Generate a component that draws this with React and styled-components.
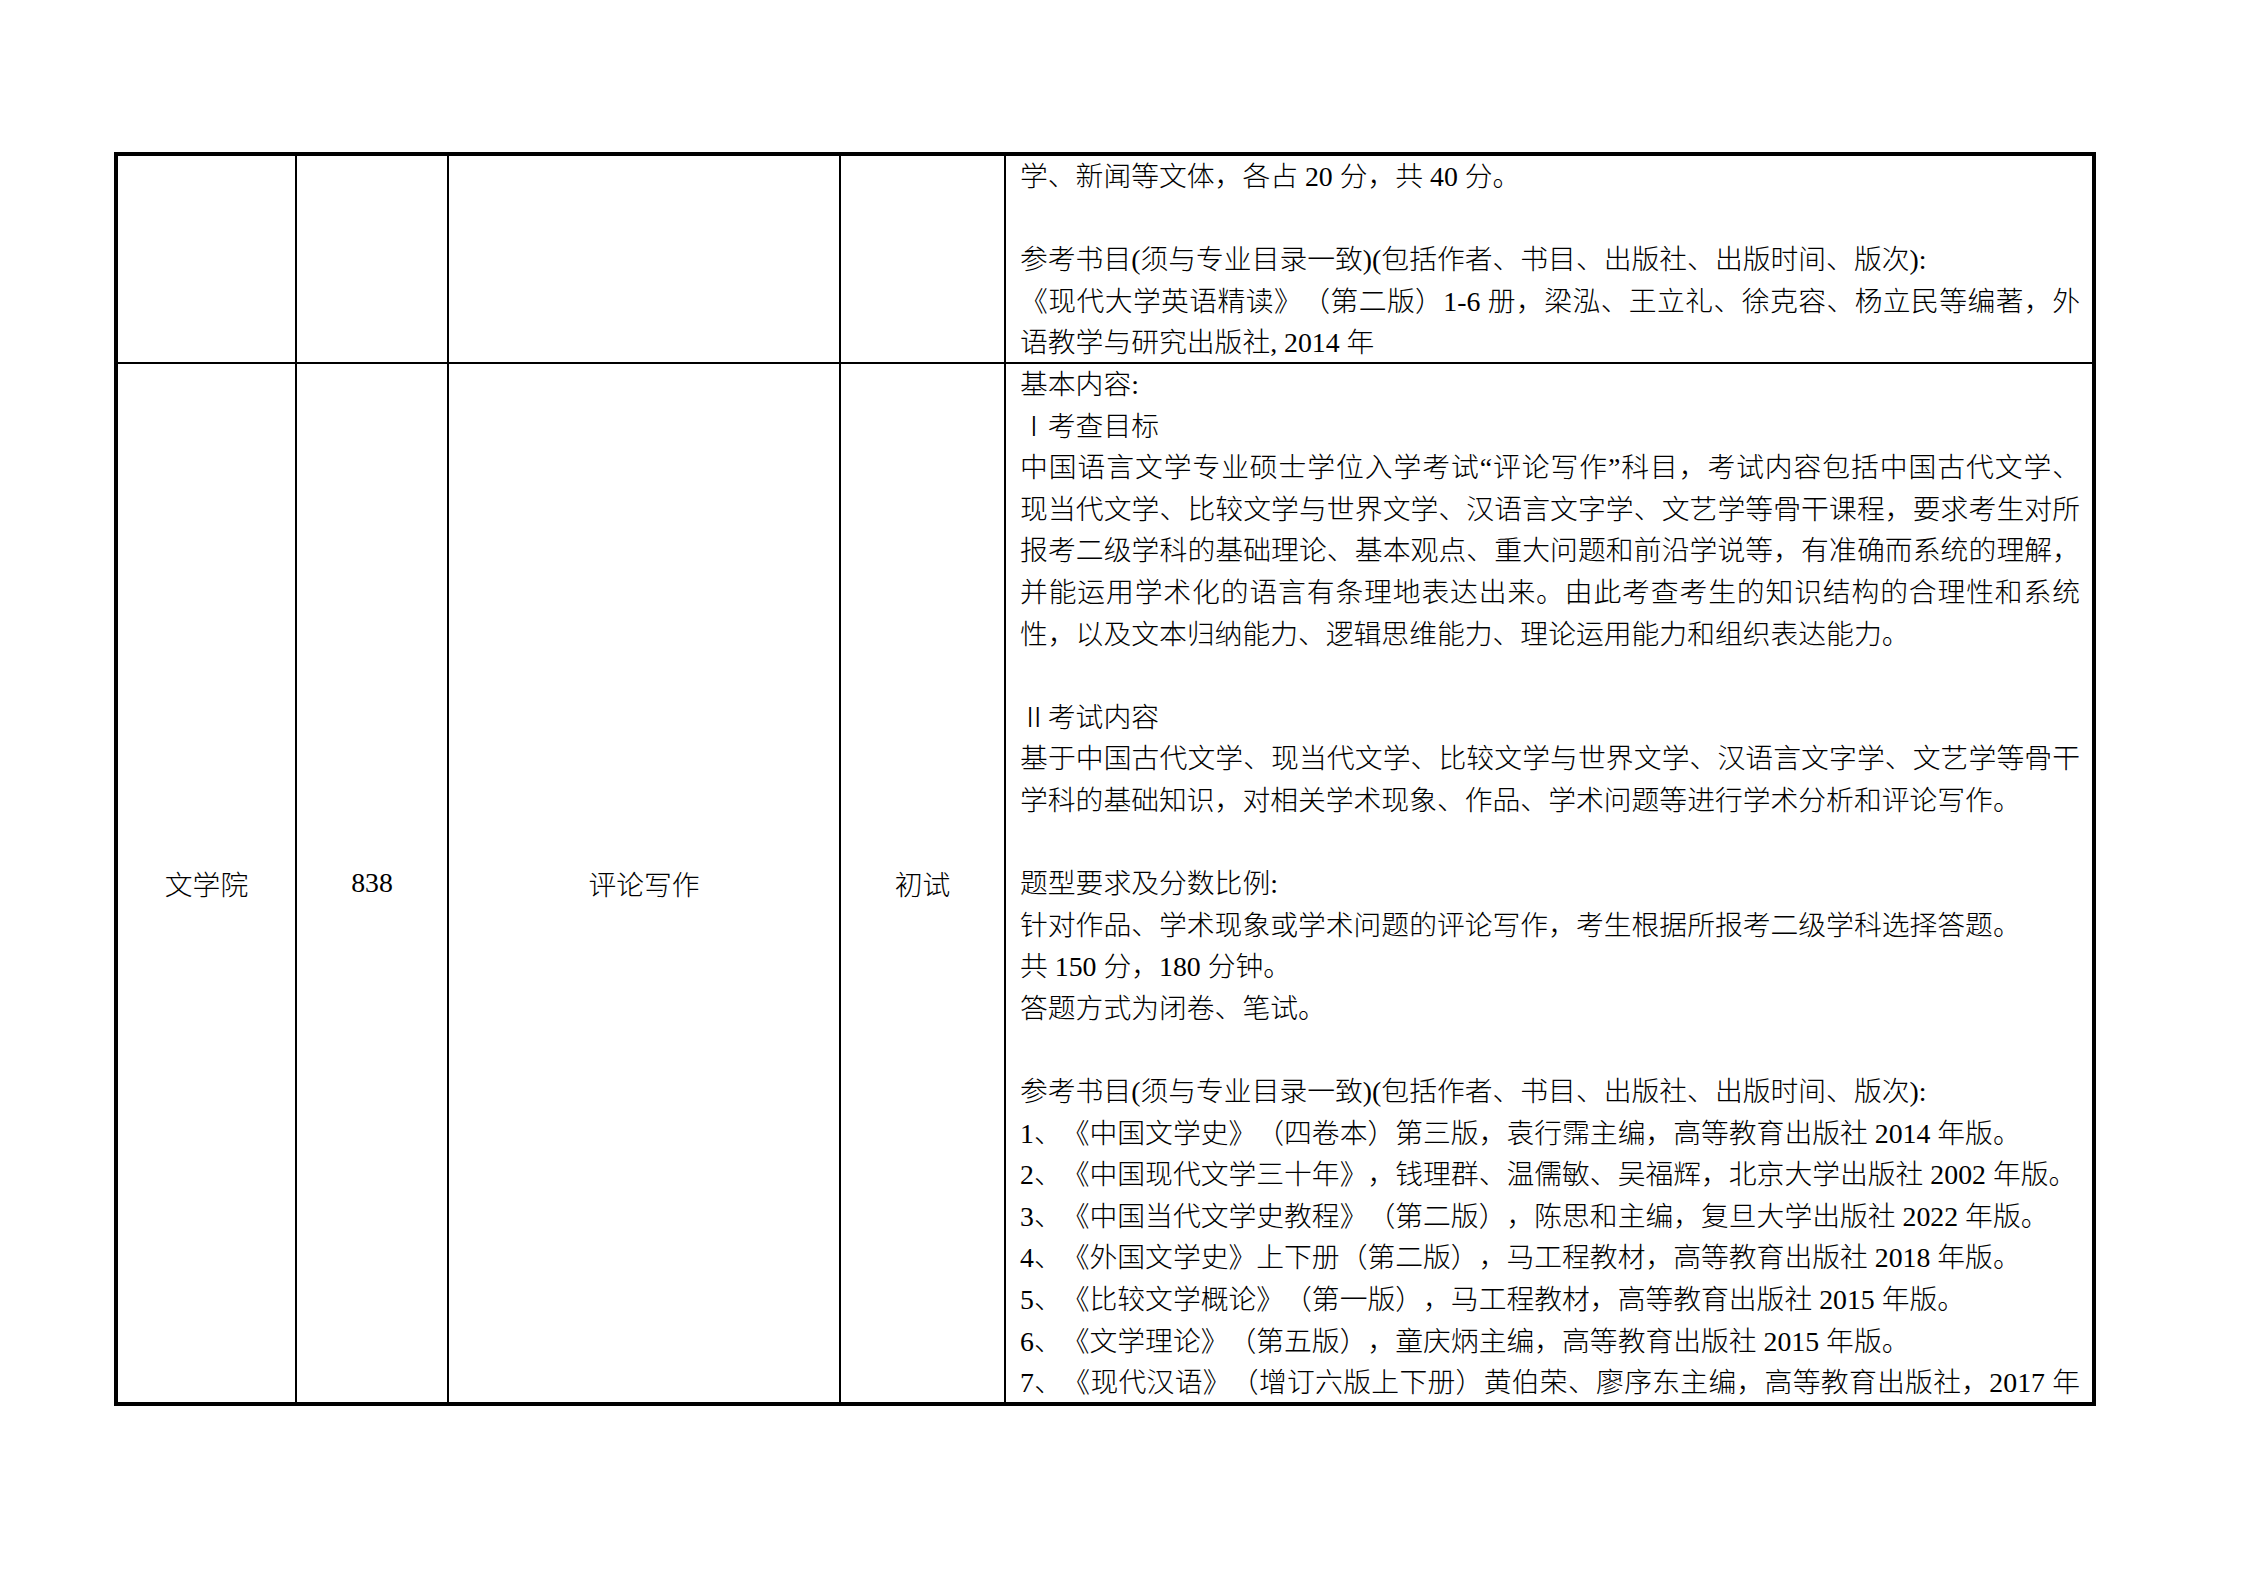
import styled, { createGlobalStyle } from "styled-components";

const GlobalStyle = createGlobalStyle`
  html, body {
    margin: 0;
    padding: 0;
    background: #ffffff;
  }
  body {
    font-family: "Liberation Serif", "Noto Sans CJK SC", serif;
    color: #000000;
    text-spacing-trim: space-all;
  }
`;

const Page = styled.div`
  width: 2244px;
  height: 1586px;
  padding: 152px 0 0 114px;
  box-sizing: border-box;
`;

const Table = styled.div`
  display: grid;
  grid-template-columns: 177px 150px 390px 163px 1086px;
  grid-template-rows: 206px 1038px;
  gap: 2px;
  width: max-content;
  border: 4px solid #000;
  background: #000;
`;

const Cell = styled.div`
  background: #fff;
  display: flex;
  align-items: center;
  justify-content: center;
  font-size: 27.8px;
  font-weight: 300;
`;

const TextCell = styled.div`
  background: #fff;
  padding: 0 12px 0 14px;
  font-size: 27.8px;
  font-weight: 300;
  overflow: hidden;
`;

const Line = styled.div`
  height: 41.6px;
  line-height: 41.6px;
  text-align: ${(p) => (p.$full ? "justify" : "left")};
  text-align-last: ${(p) => (p.$full ? "justify" : "left")};
  white-space: ${(p) => (p.$full ? "normal" : "nowrap")};
  text-spacing-trim: space-all;
`;

const firstRow = [
  { t: "学、新闻等文体，各占 20 分，共 40 分。" },
  { t: "" },
  { t: "参考书目(须与专业目录一致)(包括作者、书目、出版社、出版时间、版次):" },
  {
    t: "《现代大学英语精读》（第二版）1-6 册，梁泓、王立礼、徐克容、杨立民等编著，外",
    full: true,
  },
  { t: "语教学与研究出版社, 2014 年" },
];

const secondRow = [
  { t: "基本内容:" },
  { t: "Ⅰ考查目标" },
  {
    t: "中国语言文学专业硕士学位入学考试“评论写作”科目，考试内容包括中国古代文学、",
    full: true,
  },
  {
    t: "现当代文学、比较文学与世界文学、汉语言文字学、文艺学等骨干课程，要求考生对所",
    full: true,
  },
  {
    t: "报考二级学科的基础理论、基本观点、重大问题和前沿学说等，有准确而系统的理解，",
    full: true,
  },
  {
    t: "并能运用学术化的语言有条理地表达出来。由此考查考生的知识结构的合理性和系统",
    full: true,
  },
  { t: "性，以及文本归纳能力、逻辑思维能力、理论运用能力和组织表达能力。" },
  { t: "" },
  { t: "Ⅱ考试内容" },
  {
    t: "基于中国古代文学、现当代文学、比较文学与世界文学、汉语言文字学、文艺学等骨干",
    full: true,
  },
  { t: "学科的基础知识，对相关学术现象、作品、学术问题等进行学术分析和评论写作。" },
  { t: "" },
  { t: "题型要求及分数比例:" },
  { t: "针对作品、学术现象或学术问题的评论写作，考生根据所报考二级学科选择答题。" },
  { t: "共 150 分，180 分钟。" },
  { t: "答题方式为闭卷、笔试。" },
  { t: "" },
  { t: "参考书目(须与专业目录一致)(包括作者、书目、出版社、出版时间、版次):" },
  { t: "1、《中国文学史》（四卷本）第三版，袁行霈主编，高等教育出版社 2014 年版。" },
  { t: "2、《中国现代文学三十年》，钱理群、温儒敏、吴福辉，北京大学出版社 2002 年版。" },
  { t: "3、《中国当代文学史教程》（第二版），陈思和主编，复旦大学出版社 2022 年版。" },
  { t: "4、《外国文学史》上下册（第二版），马工程教材，高等教育出版社 2018 年版。" },
  { t: "5、《比较文学概论》（第一版），马工程教材，高等教育出版社 2015 年版。" },
  { t: "6、《文学理论》（第五版），童庆炳主编，高等教育出版社 2015 年版。" },
  {
    t: "7、《现代汉语》（增订六版上下册）黄伯荣、廖序东主编，高等教育出版社，2017 年",
    full: true,
  },
];

const Lines = ({ items }) =>
  items.map(({ t, full }, i) => (
    <Line key={i} $full={full}>
      {t || "\u00a0"}
    </Line>
  ));

function App() {
  return (
    <>
      <GlobalStyle />
      <Page>
        <Table>
          <Cell />
          <Cell />
          <Cell />
          <Cell />
          <TextCell>
            <Lines items={firstRow} />
          </TextCell>

          <Cell>文学院</Cell>
          <Cell>838</Cell>
          <Cell>评论写作</Cell>
          <Cell>初试</Cell>
          <TextCell>
            <Lines items={secondRow} />
          </TextCell>
        </Table>
      </Page>
    </>
  );
}

export default App;
